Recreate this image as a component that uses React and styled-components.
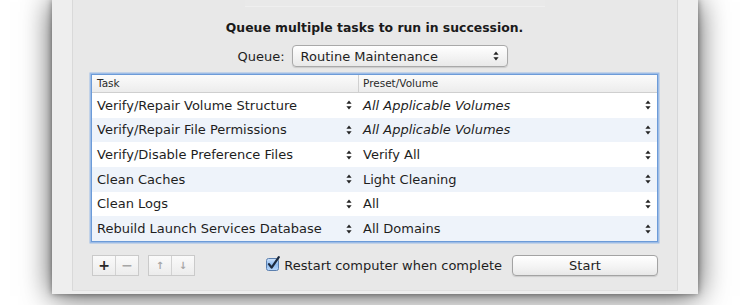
import React from 'react';
import styled, { createGlobalStyle } from 'styled-components';

const GlobalStyle = createGlobalStyle`
  html, body { margin: 0; padding: 0; background: #ffffff; }
  body {
    width: 750px;
    height: 305px;
    overflow: hidden;
    font-family: "DejaVu Sans", "Liberation Sans", sans-serif;
    color: #1e1e1e;
  }
`;

const tasks = [
  { task: 'Verify/Repair Volume Structure', preset: 'All Applicable Volumes', italic: true },
  { task: 'Verify/Repair File Permissions', preset: 'All Applicable Volumes', italic: true },
  { task: 'Verify/Disable Preference Files', preset: 'Verify All' },
  { task: 'Clean Caches', preset: 'Light Cleaning' },
  { task: 'Clean Logs', preset: 'All' },
  { task: 'Rebuild Launch Services Database', preset: 'All Domains' },
];

function Stepper({ color = '#222' }) {
  return (
    <svg width="6" height="10" viewBox="0 0 6 10">
      <path d="M3 0.5 L5.6 3.8 L0.4 3.8 Z" fill={color} />
      <path d="M3 9.5 L5.6 6.2 L0.4 6.2 Z" fill={color} />
    </svg>
  );
}

function CheckBox() {
  return (
    <svg width="15" height="15" viewBox="0 0 15 15">
      <defs>
        <linearGradient id="cb" x1="0" y1="0" x2="0" y2="1">
          <stop offset="0" stopColor="#cfe3fb" />
          <stop offset="0.5" stopColor="#8fbcf0" />
          <stop offset="1" stopColor="#b9d7fa" />
        </linearGradient>
      </defs>
      <rect x="0.5" y="2.5" width="12" height="12" rx="2" fill="url(#cb)" stroke="#5b7fae" />
      <path d="M3 8.2 L5.6 11.6 L12.8 1.2" fill="none" stroke="#1c2a3e" strokeWidth="2.2" strokeLinecap="round" strokeLinejoin="round" />
    </svg>
  );
}

export default function App() {
  return (
    <>
      <GlobalStyle />
      <Stage>
        <Window>
          <Panel>
            <TabStub />
            <Title>Queue multiple tasks to run in succession.</Title>
            <QueueRow>
              <Label>Queue:</Label>
              <PopUp>
                <span>Routine Maintenance</span>
                <Stepper />
              </PopUp>
            </QueueRow>
            <Table>
              <HeaderRow>
                <HeadCell>Task</HeadCell>
                <HeadCell divider>Preset/Volume</HeadCell>
              </HeaderRow>
              {tasks.map((t, i) => (
                <Row key={t.task} alt={i % 2 === 1}>
                  <Cell>
                    <span>{t.task}</span>
                    <Stepper />
                  </Cell>
                  <Cell italic={t.italic}>
                    <span>{t.preset}</span>
                    <Stepper />
                  </Cell>
                </Row>
              ))}
            </Table>
            <Footer>
              <Segmented>
                <SegButton>+</SegButton>
                <SegButton disabled>−</SegButton>
              </Segmented>
              <Segmented>
                <SegButton disabled small>↑</SegButton>
                <SegButton disabled small>↓</SegButton>
              </Segmented>
              <CheckLabel>
                <CheckBox />
                <span>Restart computer when complete</span>
              </CheckLabel>
              <PushButton>Start</PushButton>
            </Footer>
          </Panel>
        </Window>
      </Stage>
    </>
  );
}

const Stage = styled.div`
  width: 750px;
  height: 305px;
  padding-left: 52px;
  box-sizing: border-box;
  overflow: hidden;
`;

const Window = styled.div`
  width: 646px;
  height: 294px;
  background: #eeeeee;
  box-shadow: 0 2px 28px rgba(0, 0, 0, 0.7), 0 0 6px rgba(0, 0, 0, 0.4);
  padding-left: 20px;
  box-sizing: border-box;
`;

const Panel = styled.div`
  width: 606px;
  height: 291px;
  box-sizing: border-box;
  background: #e8e8e8;
  border-left: 1px solid #d9d9d9;
  border-right: 1px solid #d9d9d9;
  border-bottom: 1px solid #e0e0e0;
  padding: 0 19px 0 18px;
  display: flex;
  flex-direction: column;
`;

const TabStub = styled.div`
  align-self: center;
  width: 300px;
  height: 6px;
  margin-left: 40px;
  border-bottom: 1px solid #efefef;
  background: #e9e9e9;
`;

const Title = styled.div`
  margin-top: 13px;
  height: 16px;
  line-height: 16px;
  text-align: center;
  font-size: 12.4px;
  font-weight: bold;
  color: #1a1a1a;
`;

const QueueRow = styled.div`
  margin-top: 9px;
  display: flex;
  justify-content: center;
  align-items: center;
  gap: 7px;
  padding-right: 4px;
`;

const Label = styled.span`
  font-size: 13px;
  color: #1e1e1e;
`;

const PopUp = styled.div`
  width: 216px;
  height: 22px;
  box-sizing: border-box;
  border: 1px solid #a9a9a9;
  border-radius: 4px;
  background: linear-gradient(#ffffff, #f3f3f3 55%, #e9e9e9);
  box-shadow: 0 1px 1px rgba(0, 0, 0, 0.12);
  display: flex;
  align-items: center;
  justify-content: space-between;
  padding: 0 8px 0 8px;
  font-size: 13px;
  color: #1e1e1e;
`;

const Table = styled.div`
  margin-top: 7px;
  height: 168px;
  box-sizing: border-box;
  border: 1px solid #6c9bd8;
  box-shadow: 0 0 0 1.5px rgba(132, 173, 230, 0.75);
  background: #ffffff;
  display: grid;
  grid-template-columns: 266px 1fr;
  grid-template-rows: 18px repeat(6, 1fr);
`;

const HeaderRow = styled.div`
  grid-column: 1 / -1;
  display: grid;
  grid-template-columns: 266px 1fr;
  background: linear-gradient(#fbfbfb, #ececec);
  border-bottom: 1px solid #cfcfcf;
  box-sizing: border-box;
`;

const HeadCell = styled.div`
  font-size: 10.5px;
  line-height: 17px;
  color: #2a2a2a;
  padding-left: ${(p) => (p.divider ? '4px' : '5px')};
  border-left: ${(p) => (p.divider ? '1px solid #d0d0d0' : 'none')};
`;

const Row = styled.div`
  grid-column: 1 / -1;
  display: grid;
  grid-template-columns: 266px 1fr;
  background: ${(p) => (p.alt ? '#eef3fa' : '#ffffff')};
`;

const Cell = styled.div`
  display: flex;
  align-items: center;
  justify-content: space-between;
  padding: 0 6px 0 5px;
  font-size: 13px;
  font-style: ${(p) => (p.italic ? 'italic' : 'normal')};
  color: #1e1e1e;
  white-space: nowrap;
`;

const Footer = styled.div`
  margin-top: 12px;
  height: 22px;
  display: flex;
  align-items: center;
  padding-left: 1px;
`;

const Segmented = styled.div`
  display: flex;
  height: 21px;
  margin-right: 9px;
  border: 1px solid #cacaca;
  box-sizing: border-box;
  background: linear-gradient(#fafafa, #ececec);
`;

const SegButton = styled.div`
  width: 22px;
  display: flex;
  align-items: center;
  justify-content: center;
  font-size: ${(p) => (p.small ? '10px' : '14px')};
  font-weight: bold;
  color: ${(p) => (p.disabled ? '#a6a6a6' : '#2a2a2a')};
  & + & {
    border-left: 1px solid #d2d2d2;
  }
`;

const CheckLabel = styled.label`
  margin-left: auto;
  display: flex;
  align-items: center;
  gap: 3px;
  font-size: 13px;
  color: #1e1e1e;
  margin-right: 10px;
  svg { margin-top: -3px; }
`;

const PushButton = styled.div`
  width: 146px;
  height: 21px;
  box-sizing: border-box;
  border: 1px solid #a3a3a3;
  border-radius: 4px;
  background: linear-gradient(#ffffff, #f4f4f4 55%, #e8e8e8);
  box-shadow: 0 1px 1px rgba(0, 0, 0, 0.12);
  display: flex;
  align-items: center;
  justify-content: center;
  font-size: 13px;
  color: #1e1e1e;
`;
